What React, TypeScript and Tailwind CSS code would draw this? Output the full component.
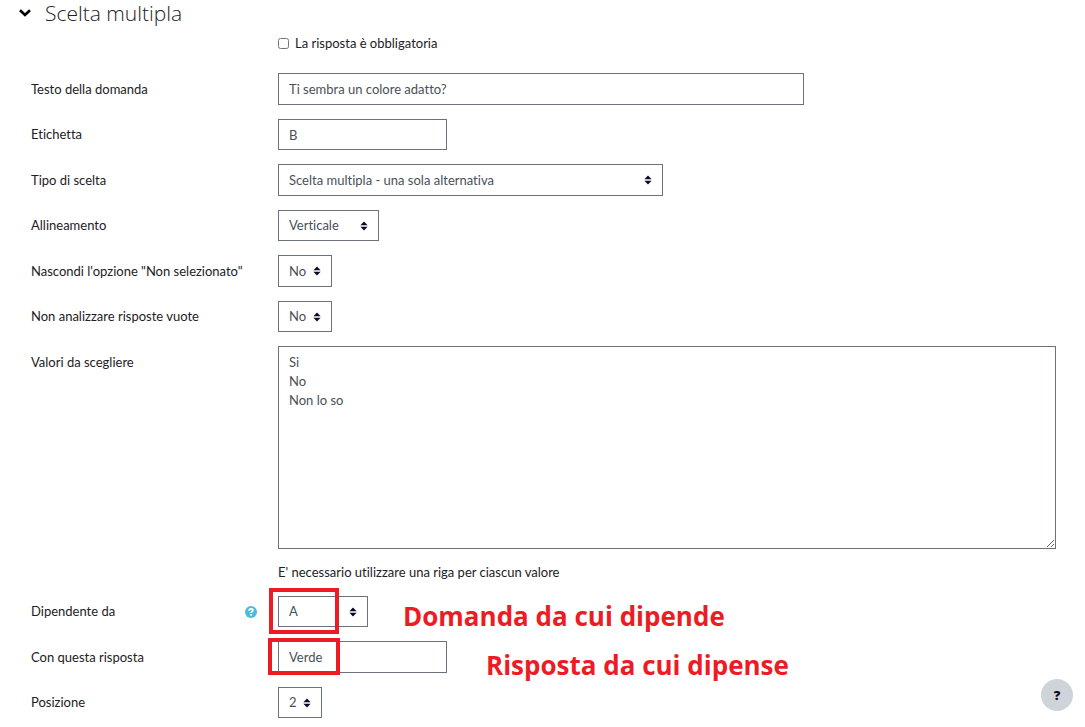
import { useState } from "react";
import type { ReactNode } from "react";

const fieldClass =
  "block border border-[#6a737b] bg-white px-[10px] text-[13px] text-[#495057] h-8 group-even:h-[31px]";

const noteClass =
  "pointer-events-none absolute whitespace-nowrap font-['Open_Sans','Noto_Sans',sans-serif] text-[26px] leading-10 text-[#ed1c24]";

function Row({ label, htmlFor, help, children }: { label: string; htmlFor: string; help?: boolean; children: ReactNode }) {
  return (
    <div className="group flex items-start">
      <div className="flex w-[247px] shrink-0 items-center justify-between pr-[21px] h-8 group-even:h-[31px]">
        <label htmlFor={htmlFor}>{label}</label>
        {help && (
          <button type="button" aria-label={`Aiuto su ${label}`} className="cursor-pointer">
            <svg viewBox="0 0 14 14" className="size-3">
              <circle cx="7" cy="7" r="7" fill="#4fbadb" />
              <path d="M4.8 5.5C4.9 4.1 5.8 3.4 7 3.4s2.2.7 2.2 1.8c0 1.5-2.1 1.5-2.1 2.9" fill="none" stroke="#fff" strokeWidth="2" />
              <rect x="6" y="9.2" width="2.1" height="2" fill="#fff" />
            </svg>
          </button>
        )}
      </div>
      <div className="relative min-w-0 flex-1">{children}</div>
    </div>
  );
}

function Select({ id, width, options }: { id: string; width: string; options: string[] }) {
  return (
    <div className={`relative max-w-full ${width}`}>
      <select id={id} className={`${fieldClass} w-full appearance-none`}>
        {options.map((o) => (
          <option key={o}>{o}</option>
        ))}
      </select>
      <svg viewBox="0 0 8 10" className="pointer-events-none absolute right-[11px] top-1/2 h-[10px] w-2 -translate-y-1/2" fill="#0b0b23">
        <path d="M4 0.4 7.6 4.2H0.4zM4 9.6 0.4 5.8h7.2z" />
      </svg>
    </div>
  );
}

export default function App() {
  const [open, setOpen] = useState(true);

  return (
    <main className="relative bg-white pb-2 pl-[31px] pr-[29px] font-[Lato,'Noto_Sans',sans-serif] text-[13px] leading-[19px] text-[#1d2125] [font-variant-ligatures:none]">
      <h3 className="-ml-3 flex h-[26px] items-center font-['Open_Sans','Noto_Sans',sans-serif] text-[21px] font-light leading-[26px]">
        <button type="button" aria-expanded={open} onClick={() => setOpen(!open)} className="flex items-center gap-[14px]">
          <svg viewBox="0 0 12 8" className="h-2 w-3" fill="none" stroke="#000" strokeWidth="2.6">
            <path d="M1 1.2 6 6 11 1.2" />
          </svg>
          Scelta multipla
        </button>
      </h3>

      {open && (
        <form>
          {/* obbligatoria */}
          <div className="mb-[20px] mt-2 flex h-[19px] items-center gap-[6px] pl-[247px]">
            <input id="required" type="checkbox" className="size-[11px]" />
            <label htmlFor="required">La risposta è obbligatoria</label>
          </div>

          <div className="flex flex-col gap-[14px]">
            <Row label="Testo della domanda" htmlFor="name">
              <input id="name" defaultValue="Ti sembra un colore adatto?" className={`${fieldClass} w-[526px] max-w-full`} />
            </Row>
            <Row label="Etichetta" htmlFor="label">
              <input id="label" defaultValue="B" className={`${fieldClass} w-[169px]`} />
            </Row>
            <Row label="Tipo di scelta" htmlFor="subtype">
              <Select id="subtype" width="w-[385px]" options={["Scelta multipla - una sola alternativa"]} />
            </Row>
            <Row label="Allineamento" htmlFor="horizontal">
              <Select id="horizontal" width="w-[101px]" options={["Verticale", "Orizzontale"]} />
            </Row>
            <Row label={`Nascondi l'opzione "Non selezionato"`} htmlFor="hide">
              <Select id="hide" width="w-[54px]" options={["No", "Sì"]} />
            </Row>
            <Row label="Non analizzare risposte vuote" htmlFor="ignore">
              <Select id="ignore" width="w-[54px]" options={["No", "Sì"]} />
            </Row>
            <Row label="Valori da scegliere" htmlFor="values">
              <textarea
                id="values"
                defaultValue={"Si\nNo\nNon lo so"}
                className="block h-[203px] w-full border border-[#6a737b] px-[10px] py-[6px] text-[#495057]"
              />
              <p className="mt-[14px] leading-[19px]">E' necessario utilizzare una riga per ciascun valore</p>
            </Row>
            <Row label="Dipendente da" htmlFor="depend" help>
              <Select id="depend" width="w-[90px]" options={["A"]} />
              <span className="pointer-events-none absolute -left-[9px] -top-2 h-[46px] w-[70px] border-4 border-[#ed1c24]" />
              <strong className={`${noteClass} left-[125px] top-0`}>Domanda da cui dipende</strong>
            </Row>
            <Row label="Con questa risposta" htmlFor="answer">
              <input id="answer" defaultValue="Verde" className={`${fieldClass} w-[169px]`} />
              <span className="pointer-events-none absolute -left-[10px] -top-[3px] h-[37px] w-[72px] border-4 border-[#ed1c24]" />
              <strong className={`${noteClass} left-[208px] top-1`}>Risposta da cui dipense</strong>
            </Row>
            <Row label="Posizione" htmlFor="position">
              <Select id="position" width="w-[44px]" options={["2", "1", "3"]} />
            </Row>
          </div>
        </form>
      )}

      <button
        type="button"
        aria-label="Aiuto"
        className="fixed bottom-4 right-3 flex size-8 items-center justify-center rounded-full bg-[#ced4da] font-['Open_Sans','Noto_Sans',sans-serif] text-[13px] font-extrabold text-[#0b0b23]"
      >
        ?
      </button>
    </main>
  );
}
